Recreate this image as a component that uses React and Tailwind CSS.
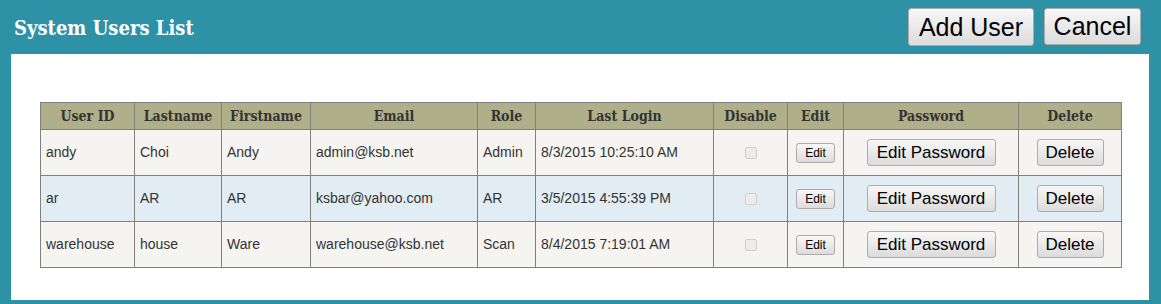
import React from 'react';

const users = [
  { id: 'andy', last: 'Choi', first: 'Andy', email: 'admin@ksb.net', role: 'Admin', login: '8/3/2015 10:25:10 AM' },
  { id: 'ar', last: 'AR', first: 'AR', email: 'ksbar@yahoo.com', role: 'AR', login: '3/5/2015 4:55:39 PM' },
  { id: 'warehouse', last: 'house', first: 'Ware', email: 'warehouse@ksb.net', role: 'Scan', login: '8/4/2015 7:19:01 AM' },
];

const columns = [
  { label: 'User ID', w: 'w-[94px]' },
  { label: 'Lastname', w: 'w-[87px]' },
  { label: 'Firstname', w: 'w-[89px]' },
  { label: 'Email', w: 'w-[167px]' },
  { label: 'Role', w: 'w-[58px]' },
  { label: 'Last Login', w: 'w-[178px]' },
  { label: 'Disable', w: 'w-[74px]' },
  { label: 'Edit', w: 'w-[56px]' },
  { label: 'Password', w: 'w-[175px]' },
  { label: 'Delete', w: 'w-[103px]' },
];

const btn =
  'border border-[#acacac] rounded-[3px] bg-gradient-to-b from-[#f7f7f7] to-[#dcdcdc] text-black font-["Liberation_Sans",Arial,sans-serif] leading-none';

const cell = 'border border-[#808080] px-[5px] text-[14px] text-[#333] align-middle';

export default function App() {
  return (
    <div className="w-[1161px] h-[304px] bg-[#2e92a7] flex flex-col">
      {/* Header */}
      <div className="h-[54px] flex items-start justify-between pl-[14px] pr-[20px]">
        <h1 className="mt-[13px] text-white font-bold text-[20px] font-['DejaVu_Serif_Condensed','DejaVu_Serif',serif]">
          System Users List
        </h1>
        <div className="flex gap-[10px] mt-[8px]">
          <button className={`${btn} w-[126px] h-[38px] text-[25px]`}>Add User</button>
          <button className={`${btn} w-[97px] h-[37px] text-[25px]`}>Cancel</button>
        </div>
      </div>

      {/* Panel */}
      <div className="ml-[11px] mr-[12px] h-[246px] bg-white pt-[48px] pl-[29px]">
        <table className="table-fixed border-collapse w-[1082px] font-['Liberation_Sans',Arial,sans-serif]">
          <thead>
            <tr className="h-[27px] bg-[#afaf89]">
              {columns.map((c) => (
                <th
                  key={c.label}
                  className={`${c.w} border border-[#808080] text-[14px] font-bold text-[#333] text-center font-['DejaVu_Serif_Condensed','DejaVu_Serif',serif] leading-none`}
                >
                  {c.label}
                </th>
              ))}
            </tr>
          </thead>
          <tbody>
            {users.map((u, i) => (
              <tr key={u.id} className={`h-[46px] ${i === 1 ? 'bg-[#e1ecf3]' : 'bg-[#f5f4f1]'}`}>
                <td className={cell}>{u.id}</td>
                <td className={cell}>{u.last}</td>
                <td className={cell}>{u.first}</td>
                <td className={cell}>{u.email}</td>
                <td className={cell}>{u.role}</td>
                <td className={cell}>{u.login}</td>
                <td className={`${cell} text-center`}>
                  <span className="inline-block align-middle w-[12px] h-[12px] rounded-[2px] border border-[#cfcfcf] bg-[#ececec]" />
                </td>
                <td className={`${cell} text-center`}>
                  <button className={`${btn} w-[39px] h-[20px] text-[12px]`}>Edit</button>
                </td>
                <td className={`${cell} text-center`}>
                  <button className={`${btn} w-[129px] h-[27px] text-[17px]`}>Edit Password</button>
                </td>
                <td className={`${cell} text-center`}>
                  <button className={`${btn} w-[67px] h-[27px] text-[17px]`}>Delete</button>
                </td>
              </tr>
            ))}
          </tbody>
        </table>
      </div>
    </div>
  );
}
